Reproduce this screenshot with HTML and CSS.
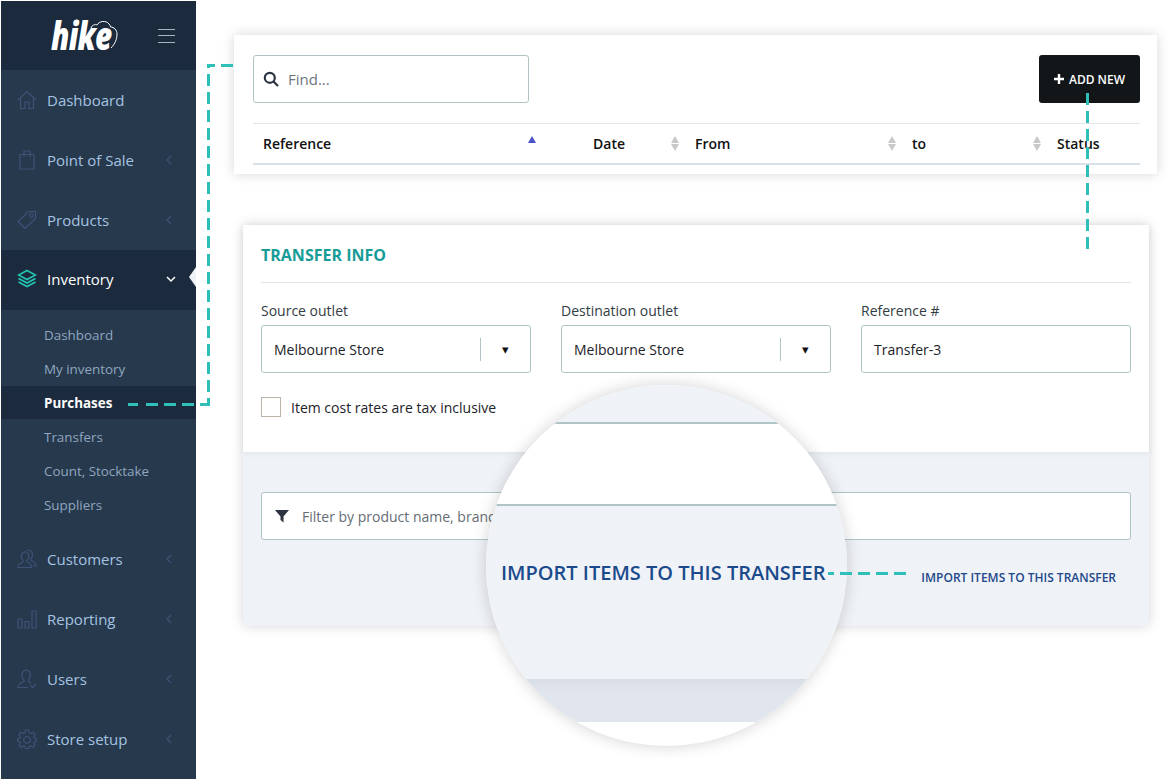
FILE: index.html
```html
<!DOCTYPE html>
<html>

<head>
	<meta charset='utf-8'>
	<title>Hike - Transfers</title>
	<link rel="stylesheet" href="styles.css">
</head>

<body>
	<aside class="sidebar">
		<div class="brand">
			<div class="logo">
				<span class="logo_word">hike</span>
				<svg class="logo_cloud" width="30" height="30" viewBox="0 0 30 30" fill="none" stroke="#fff" stroke-width="1"><path d="M1 7C2 4 5 3 7 4C9 0 16 -1 19 3C20 4 20.500 5 20.500 6C24 6 27 9 27 13C27 18 25 23 21 27"/></svg>
			</div>
			<div class="burger"><i></i><i></i><i></i></div>
		</div>
		<a class="nav">
			<svg class="nav_icon" width="20" height="20" viewBox="0 0 20 20"><path d="M1 10L10 1.500L19 10M3.500 8.500V18.500H8V12H12V18.500H16.500V8.500"/></svg>
			<span>Dashboard</span>
		</a>
		<a class="nav">
			<svg class="nav_icon" width="20" height="20" viewBox="0 0 20 20"><path d="M3 4.500H17V19H3ZM7 7V1H13V7"/></svg>
			<span>Point of Sale</span>
			<svg class="chev" width="8" height="10" viewBox="0 0 8 10"><path d="M6 1L2 5L6 9"/></svg>
		</a>
		<a class="nav">
			<svg class="nav_icon" width="20" height="20" viewBox="0 0 20 20"><path d="M1 11.500L11.500 1.500H18.500V8.500L8 18.500ZM14.500 3.500A1.800 1.800 0 1 0 14.501 3.500"/></svg>
			<span>Products</span>
			<svg class="chev" width="8" height="10" viewBox="0 0 8 10"><path d="M6 1L2 5L6 9"/></svg>
		</a>
		<a class="nav nav_open">
			<svg class="nav_icon" width="20" height="20" viewBox="0 0 20 20"><path d="M10 1.500L18.500 6L10 10.500L1.500 6ZM1.500 9.500L10 14L18.500 9.500M1.500 13L10 17.500L18.500 13"/></svg>
			<span>Inventory</span>
			<svg class="chev" width="10" height="8" viewBox="0 0 10 8"><path d="M1 2L5 6L9 2"/></svg>
		</a>
		<div class="sub">
			<a class="sub_item">Dashboard</a>
			<a class="sub_item">My inventory</a>
			<a class="sub_item sub_active">Purchases</a>
			<a class="sub_item">Transfers</a>
			<a class="sub_item">Count, Stocktake</a>
			<a class="sub_item">Suppliers</a>
		</div>
		<a class="nav">
			<svg class="nav_icon" width="20" height="20" viewBox="0 0 20 20"><path d="M1 18.500C1 15 3 14 6 13V11.500C4.500 10 4 8 4.500 6C5 3.500 7 2.500 9 3C11 3.500 12 5.500 11.800 7.500C11.600 9 11 10.500 10 11.500V13C13 14 14.500 15 14.500 18.500ZM10 1.500C13 .5 15.500 2.500 15.500 5.500C15.500 7.500 15 9 14 10V11.500C17 12.500 19 13.500 19 17H16"/></svg>
			<span>Customers</span>
			<svg class="chev" width="8" height="10" viewBox="0 0 8 10"><path d="M6 1L2 5L6 9"/></svg>
		</a>
		<a class="nav">
			<svg class="nav_icon" width="20" height="20" viewBox="0 0 20 20"><path d="M1 10H5V19H1ZM8 12.500H12V19H8ZM15 2H19V19H15Z"/></svg>
			<span>Reporting</span>
			<svg class="chev" width="8" height="10" viewBox="0 0 8 10"><path d="M6 1L2 5L6 9"/></svg>
		</a>
		<a class="nav">
			<svg class="nav_icon" width="20" height="20" viewBox="0 0 20 20"><path d="M11 18.500H1C1 15.500 3 14 7 12.500V11C5 9.500 4.500 7 5 5C5.500 2.500 7.500 1 9.500 1.200C12 1.500 13.500 3.500 13.300 6C13.100 8 12.500 10 11.500 11V12.500C12.500 13 13.500 13.500 14.500 14M13 16L15.500 18.500L19 14.500"/></svg>
			<span>Users</span>
			<svg class="chev" width="8" height="10" viewBox="0 0 8 10"><path d="M6 1L2 5L6 9"/></svg>
		</a>
		<a class="nav">
			<svg class="nav_icon" width="20" height="20" viewBox="0 0 20 20"><path d="M8.500 1H11.500L12 3.500L14 4.500L16.200 3.200L18.200 5.500L16.800 7.500L17.400 9L19.500 10V12L17.400 12.700L16.800 14.300L18 16.500L16 18.400L14 17L12.300 17.700L11.500 19.500H8.500L8 17.700L6 17L4 18.400L2 16.500L3.200 14.300L2.600 12.700L.5 12V10L2.600 9L3.200 7.500L1.800 5.500L3.800 3.200L6 4.500L8 3.500ZM10 7.500A3.300 3.300 0 1 0 10.001 7.500"/></svg>
			<span>Store setup</span>
			<svg class="chev" width="8" height="10" viewBox="0 0 8 10"><path d="M6 1L2 5L6 9"/></svg>
		</a>
	</aside>

	<main class="content">
		<section class="list_panel">
			<div class="toolbar">
				<div class="field find">
					<svg width="16" height="16" viewBox="0 0 16 16" fill="none" stroke="#2b3440" stroke-width="2.200"><circle cx="6.800" cy="6.800" r="5"/><path d="M10.500 10.500L15 15"/></svg>
					<span class="find_text">Find...</span>
				</div>
				<button class="add_new"><svg width="10" height="10" viewBox="0 0 10 10" fill="white"><path d="M3.800 0H6.200V3.800H10V6.200H6.200V10H3.800V6.200H0V3.800H3.800Z"/></svg> ADD NEW</button>
			</div>
			<div class="thead">
				<div class="th th_ref">Reference <span class="sort sort_up"></span></div>
				<div class="th th_date">Date <span class="sort"></span></div>
				<div class="th th_from">From <span class="sort"></span></div>
				<div class="th th_to">to <span class="sort"></span></div>
				<div class="th th_status">Status</div>
			</div>
		</section>

		<section class="transfer_panel">
			<div class="info">
				<h2 class="info_title">TRANSFER INFO</h2>
				<div class="info_grid">
					<div>
						<label class="lbl">Source outlet</label>
						<div class="field select">
							<span>Melbourne Store</span>
							<span class="select_arrow">&#9662;</span>
						</div>
					</div>
					<div>
						<label class="lbl">Destination outlet</label>
						<div class="field select">
							<span>Melbourne Store</span>
							<span class="select_arrow">&#9662;</span>
						</div>
					</div>
					<div>
						<label class="lbl">Reference #</label>
						<div class="field text_field">Transfer-3</div>
					</div>
				</div>
				<div class="check_row">
					<span class="check"></span>
					<span>Item cost rates are tax inclusive</span>
				</div>
			</div>
			<div class="items">
				<div class="field filter">
					<svg width="14" height="14" viewBox="0 0 14 14" fill="#2b3440"><path d="M0 1H14L8.500 7.500V13.500L5.500 11V7.500Z"/></svg>
					<span class="filter_text">Filter by product name, brand, tag or SKU</span>
				</div>
				<div class="import_row">IMPORT ITEMS TO THIS TRANSFER</div>
			</div>
		</section>
	</main>

	<!-- zoom lens and callouts sit on top of everything -->
	<div class="lens">
		<div class="lens_top"></div>
		<div class="lens_white"></div>
		<div class="lens_mid">IMPORT ITEMS TO THIS TRANSFER</div>
		<div class="lens_bottom"></div>
	</div>
	<svg class="callouts" width="1171" height="779" viewBox="0 0 1171 779" fill="none" stroke="#2dbfb8" stroke-width="3" stroke-dasharray="12 6">
		<path d="M233 65.500H221M215 65.500H207"/>
		<path d="M208.500 64V68M208.500 74V406"/>
		<path d="M128 404.500H138M146 404.500H210"/>
		<path d="M1087.500 93V250"/>
		<path d="M828 573.500H834M840 573.500H906"/>
	</svg>
</body>

</html>
```

FILE: styles.css
```css
* {
	box-sizing: border-box;
}
html, body {
	margin: 0;
	height: 779px;
	overflow: hidden;
}
body {
	display: flex;
	background: white;
	font: 14px "Open Sans", sans-serif;
	color: #333c44;
}

/* sidebar */
.sidebar {
	width: 195px;
	height: 778px;
	margin: 1px 0 0 1px;
	flex: none;
	background: #27394c;
	position: relative;
}
.brand {
	height: 69px;
	background: #1b2a3c;
	display: flex;
	align-items: center;
	padding-left: 50px;
}
.logo {
	position: relative;
	width: 66px;
	height: 40px;
}
.logo_word {
	display: inline-block;
	font: italic 800 38px/38px "Open Sans", sans-serif;
	letter-spacing: -1px;
	color: white;
	transform: scaleX(.78);
	transform-origin: left;
}
.logo_cloud {
	position: absolute;
	left: 39px;
	top: 5px;
}
.burger {
	margin-left: 41px;
	width: 17px;
}
.burger i {
	display: block;
	height: 1px;
	background: #a9b4bf;
	margin: 5.500px 0;
}
.nav {
	height: 60px;
	display: flex;
	align-items: center;
	padding-left: 16px;
	font-size: 15px;
	color: #a5c3e2;
	position: relative;
}
.nav span {
	margin-left: 10px;
}
.nav_icon {
	flex: none;
	fill: none;
	stroke: #3d5378;
	stroke-width: 1.200;
}
.chev {
	position: absolute;
	left: 164px;
	top: 25px;
	fill: none;
	stroke: #3d5378;
	stroke-width: 1.200;
}
.nav_open {
	background: #1b2a3c;
	color: white;
	padding-bottom: 2px;
}
.nav_open .nav_icon {
	stroke: #24c6b3;
	stroke-width: 1.600;
}
.nav_open .chev {
	left: 165px;
	top: 25px;
	stroke: white;
	stroke-width: 1.500;
}
.nav_open::after {
	content: "";
	position: absolute;
	right: 0;
	top: 17px;
	border: 10px solid transparent;
	border-left: 0;
	border-right: 7px solid #eff2f7;
}
.sub {
	padding-top: 8px;
	height: 219px;
}
.sub_item {
	display: block;
	height: 34px;
	line-height: 34px;
	padding-left: 43px;
	font-size: 13.400px;
	color: #8ea7c0;
}
.sub_active {
	background: #1b2a3c;
	color: white;
	font-weight: 700;
	height: 33px;
	margin-bottom: 1px;
}

/* panels */
.content {
	flex: 1;
	display: flex;
	flex-direction: column;
	padding-top: 35px;
}
.list_panel {
	margin: 0 14px 0 38px;
	height: 139px;
	padding: 20px 17px 0 19px;
	background: white;
	box-shadow: 0 0 12px rgba(0, 0, 0, .16);
}
.toolbar {
	display: flex;
	justify-content: space-between;
	height: 69px;
	border-bottom: 1px solid #e2e5e8;
}
.field {
	height: 48px;
	background: white;
	border: 1px solid #afc5c5;
	border-radius: 3px;
	display: flex;
	align-items: center;
}
.find {
	width: 276px;
	padding-left: 9px;
}
.find_text {
	margin-left: 9px;
	font-size: 15px;
	color: #6c757d;
}
.add_new {
	width: 101px;
	height: 48px;
	border: 0;
	border-radius: 3px;
	background: #121619;
	color: white;
	font: 600 12px "Open Sans", sans-serif;
	padding: 0;
	display: flex;
	align-items: center;
	justify-content: center;
	gap: 5px;
}
.thead {
	display: grid;
	grid-template-columns: 288px 144px 217px 145px 93px;
	height: 41px;
	border-bottom: 2px solid #d8e0e8;
}
.th {
	font-weight: 600;
	color: #111;
	display: flex;
	justify-content: space-between;
	align-items: center;
	padding: 0 6px 0 10px;
	position: relative;
}
.th_ref {
	padding-right: 5px;
}
.th_date {
	padding-left: 52px;
}
.sort {
	width: 8px;
	height: 15px;
	position: relative;
}
.sort::before, .sort::after {
	content: "";
	position: absolute;
	left: 0;
	border: 4px solid transparent;
	border-width: 0 4px;
}
.sort::before {
	top: 0;
	border-bottom: 7px solid #c9c9c9;
}
.sort::after {
	bottom: 0;
	border-top: 7px solid #c9c9c9;
}
.sort_up::before {
	border-bottom-color: #4a54c8;
}
.sort_up::after {
	display: none;
}
.transfer_panel {
	margin: 51px 22px 0 47px;
	height: 401px;
	background: #eff2f7;
	box-shadow: 0 0 12px rgba(0, 0, 0, .16);
}
.info {
	height: 227px;
	background: white;
	padding: 0 18px;
	position: relative;
	box-shadow: 0 1px 6px rgba(0, 0, 0, .07);
}
.info_title {
	margin: 0;
	height: 58px;
	line-height: 60px;
	font-size: 16px;
	font-weight: 700;
	color: #179c97;
	border-bottom: 1px solid #e2e5e8;
}
.info_grid {
	display: grid;
	grid-template-columns: repeat(3, 1fr);
	gap: 30px;
	padding-top: 18px;
}
.lbl {
	display: block;
	height: 24px;
	line-height: 20px;
	color: #333c44;
}
.select {
	padding-left: 12px;
	color: #1c2228;
	position: relative;
}
.select_arrow {
	position: absolute;
	left: 218px;
	top: 12px;
	width: 50px;
	height: 23px;
	line-height: 23px;
	border-left: 1px solid #afc5c5;
	text-align: center;
	font-size: 13px;
	color: #111;
}
.text_field {
	padding-left: 12px;
	color: #1c2228;
}
.check_row {
	display: flex;
	align-items: center;
	gap: 10px;
	margin-top: 24px;
	color: #1c2228;
}
.check {
	width: 20px;
	height: 20px;
	border: 1px solid #bbb2a8;
}
.items {
	padding: 40px 18px 0;
}
.filter {
	padding-left: 13px;
	gap: 13px;
}
.filter_text {
	color: #666d74;
	padding-top: 1px;
}
.import_row {
	margin-top: 29px;
	text-align: right;
	padding-right: 15px;
	font-size: 12px;
	font-weight: 600;
	color: #23488a;
}

/* lens */
.lens {
	position: absolute;
	left: 486px;
	top: 385px;
	width: 361px;
	height: 361px;
	border-radius: 50%;
	overflow: hidden;
	background: white;
	display: flex;
	flex-direction: column;
	box-shadow: 0 0 16px rgba(0, 0, 0, .18);
}
.lens_top {
	height: 39px;
	flex: none;
	background: #eff2f7;
	border-bottom: 2px solid #afc5c5;
}
.lens_white {
	height: 82px;
	flex: none;
	background: white;
	border-bottom: 2px solid #afc5c5;
}
.lens_mid {
	height: 173px;
	flex: none;
	background: #eff2f7;
	padding: 52px 0 0 15px;
	font-size: 20px;
	line-height: 30px;
	font-weight: 600;
	color: #1a4a8c;
	white-space: nowrap;
}
.lens_bottom {
	height: 43px;
	flex: none;
	background: linear-gradient(#d9dde5, #e1e5ed 30%);
}

.callouts {
	position: absolute;
	left: 0;
	top: 0;
}
```
